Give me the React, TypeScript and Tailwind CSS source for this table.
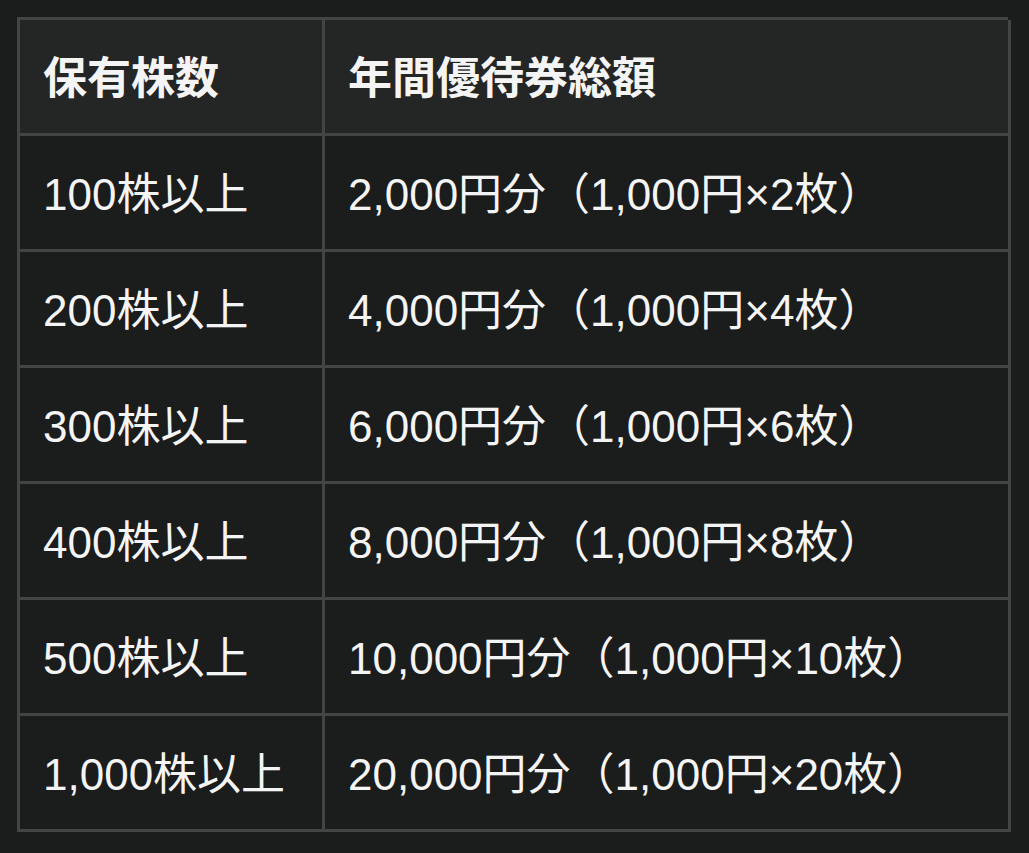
import React from "react";

const rows = [
  ["100株以上", "2,000円分（1,000円×2枚）"],
  ["200株以上", "4,000円分（1,000円×4枚）"],
  ["300株以上", "6,000円分（1,000円×6枚）"],
  ["400株以上", "8,000円分（1,000円×8枚）"],
  ["500株以上", "10,000円分（1,000円×10枚）"],
  ["1,000株以上", "20,000円分（1,000円×20枚）"],
];

export default function App() {
  return (
    <div
      className="min-h-screen w-full bg-[#1b1c1c] pl-[17px] pt-[17px] text-[#f4f4f4]"
      style={{ fontFamily: '"Liberation Sans", "Noto Sans CJK JP", sans-serif' }}
    >
      <div className="grid w-[991px] grid-cols-[305px_686px] border-l-[3px] border-t-[3px] border-[#434444]">
        {/* header */}
        <div className="flex h-[116px] items-center border-b-[3px] border-r-[3px] border-[#434444] bg-[#242525] pl-[23px] pt-[4px] text-[44px] font-bold">
          保有株数
        </div>
        <div className="flex h-[116px] items-center border-b-[3px] border-r-[3px] border-[#434444] bg-[#242525] pl-[23px] pt-[4px] text-[44px] font-bold">
          年間優待券総額
        </div>

        {rows.map(([shares, amount]) => (
          <React.Fragment key={shares}>
            <div className="flex h-[116px] items-center border-b-[3px] border-r-[3px] border-[#434444] pl-[23px] pt-[5px] text-[44px]">
              {shares}
            </div>
            <div className="flex h-[116px] items-center border-b-[3px] border-r-[3px] border-[#434444] pl-[23px] pt-[5px] text-[44px]">
              {amount}
            </div>
          </React.Fragment>
        ))}
      </div>
    </div>
  );
}
